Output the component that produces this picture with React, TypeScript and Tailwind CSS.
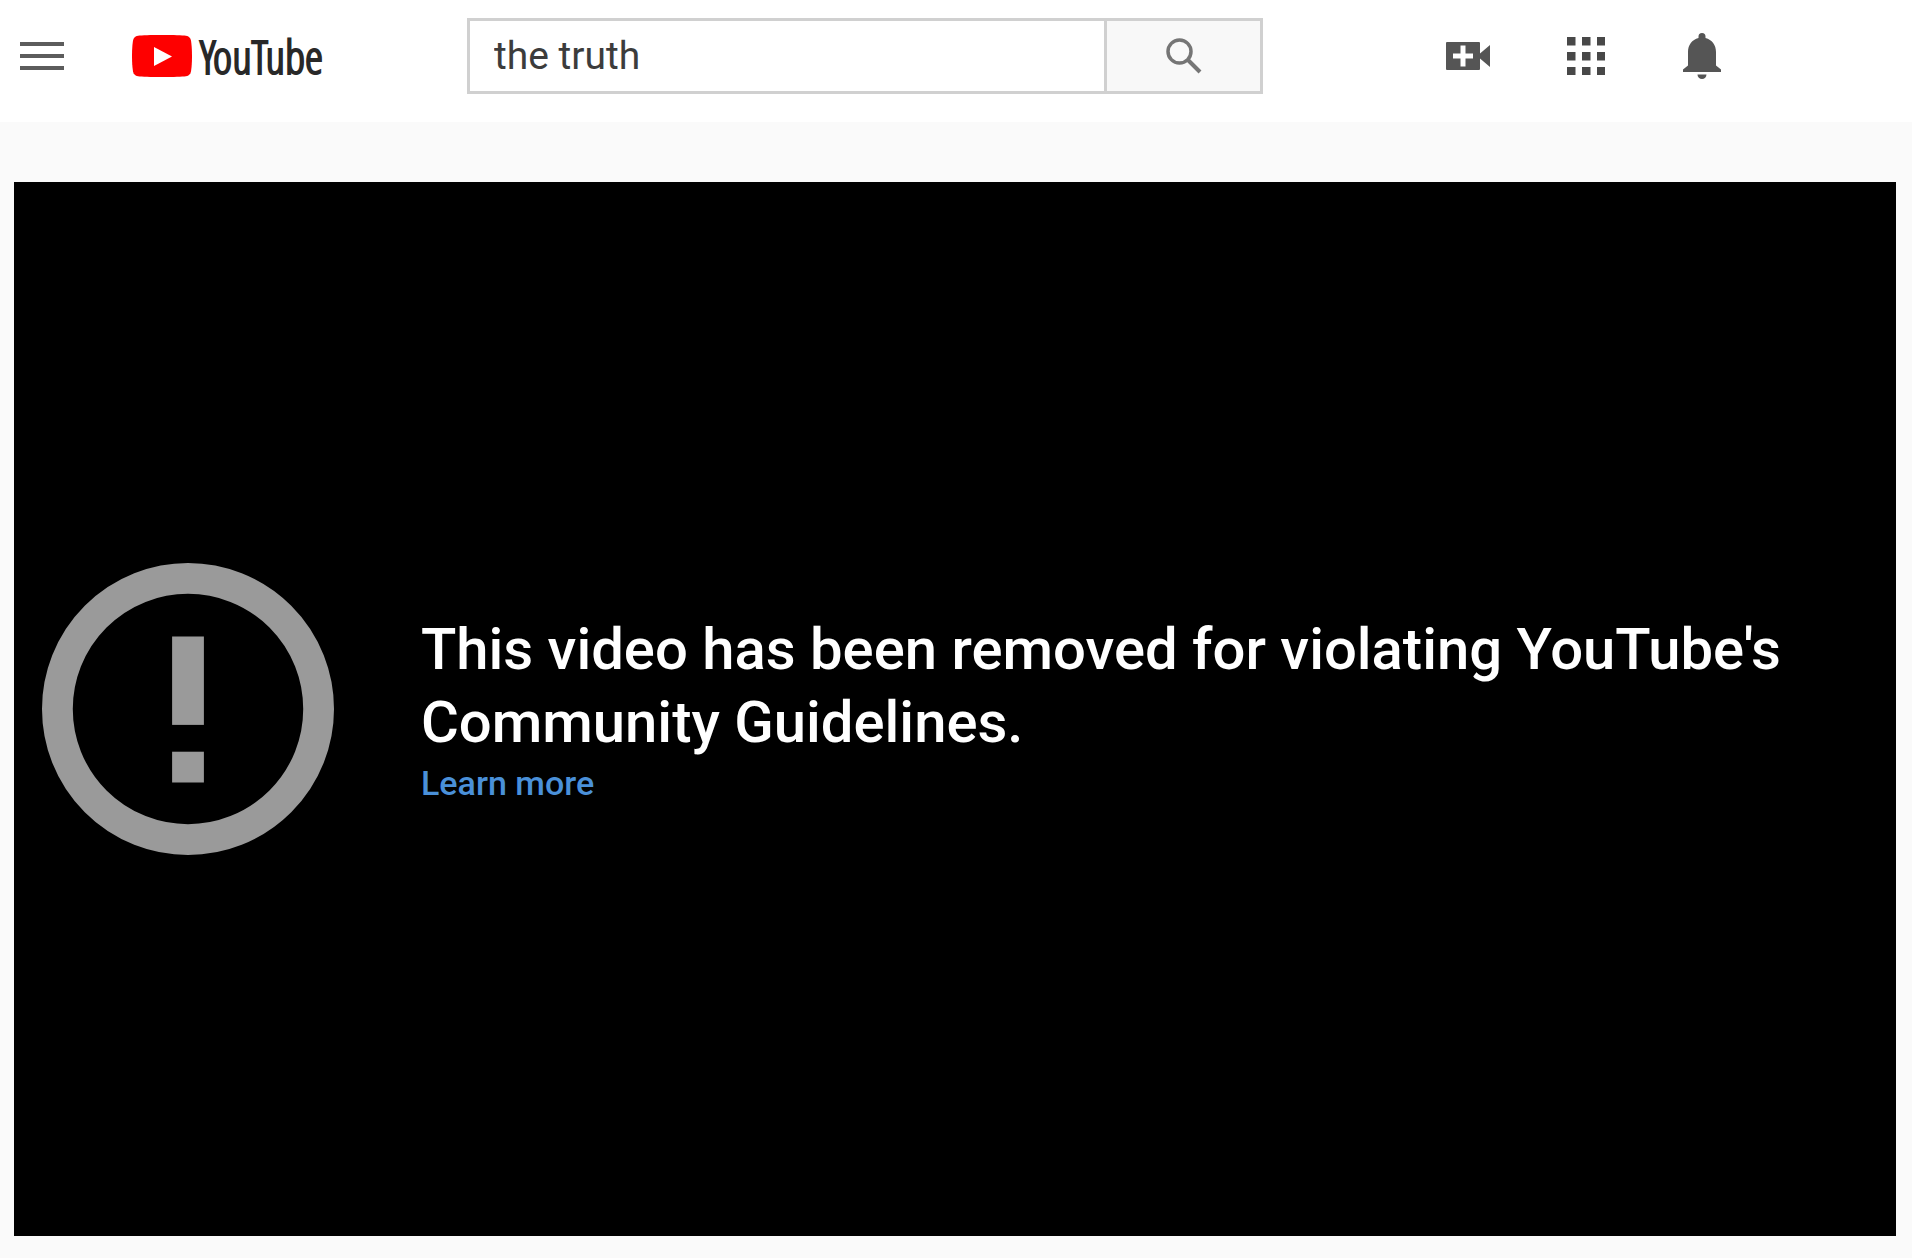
import { useState } from "react";

function MenuIcon() {
  return (
    <svg className="h-7 w-11" viewBox="0 0 44 28" fill="#5c5c5c" aria-hidden="true">
      <rect y="0" width="44" height="4" />
      <rect y="12" width="44" height="4" />
      <rect y="24" width="44" height="4" />
    </svg>
  );
}

function PlayLogo() {
  return (
    <svg className="h-[42px] w-[60px]" viewBox="0 0 60 42" aria-hidden="true">
      <path
        d="M30 0C42 0 50 .3 54 .8c3 .5 4.500 2.200 5 5C59.700 10 60 15 60 21s-.3 11-1 15.200c-.5 2.800-2 4.500-5 5-4 .5-12 .8-24 .8S10 41.700 6 41.200c-3-.5-4.500-2.200-5-5C.3 32 0 27 0 21S.3 10 1 5.800c.5-2.800 2-4.500 5-5C10 .3 18 0 30 0Z"
        fill="#fe0000"
      />
      <path d="M22 12v19l18-9.500Z" fill="#fff" />
    </svg>
  );
}

function SearchIcon() {
  return (
    <svg className="h-9 w-9" viewBox="0 0 36 36" fill="none" stroke="#757575" aria-hidden="true">
      <circle cx="13.500" cy="13.500" r="11.500" strokeWidth="3.500" />
      <path d="M21.500 21.500 34 34" strokeWidth="4" />
    </svg>
  );
}

function CreateIcon() {
  return (
    <svg className="h-7 w-11" viewBox="0 0 44 28" fill="#555" aria-hidden="true">
      <path
        fillRule="evenodd"
        d="M1 0h32a1 1 0 0 1 1 1v10.500L44 3v22l-10-8.500V27a1 1 0 0 1-1 1H1a1 1 0 0 1-1-1V1a1 1 0 0 1 1-1Zm13.500 3.500v8H7v5h7.500v8h5v-8H27v-5h-7.500v-8Z"
      />
    </svg>
  );
}

function AppsIcon() {
  const stops = [0, 15, 30];
  return (
    <svg className="h-[38px] w-[38px]" viewBox="0 0 38 38" fill="#484848" aria-hidden="true">
      {stops.map((y) => stops.map((x) => <rect key={`${x}-${y}`} x={x} y={y} width="8.500" height="8.500" />))}
    </svg>
  );
}

function BellIcon() {
  return (
    <svg className="h-[46px] w-10" viewBox="0 0 40 46" fill="#555" aria-hidden="true">
      <path d="M20 0a3.500 3.500 0 0 1 3.500 3.500V5C30 6.700 34 12 34 19v13.500l5 4V39H1v-2.500l5-4V19C6 12 10 6.700 16.500 5V3.500A3.500 3.500 0 0 1 20 0Z" />
      <path d="M15.500 41.500h9a4.500 4.500 0 0 1-9 0Z" />
    </svg>
  );
}

function AlertIcon() {
  return (
    <svg className="h-[292px] w-[292px] shrink-0" viewBox="0 0 294 294" fill="#9a9a9a" aria-hidden="true">
      <circle cx="147" cy="147" r="131.500" fill="none" stroke="#9a9a9a" strokeWidth="31" />
      <rect x="131" y="74" width="32" height="89" />
      <rect x="131" y="190" width="32" height="31" />
    </svg>
  );
}

export default function App() {
  const [query, setQuery] = useState("the truth");

  return (
    <div className="flex min-h-screen flex-col bg-white font-['Roboto',sans-serif]">
      <header className="flex items-center pt-[18px] pr-[198px] pb-7 pl-5">
        <button type="button" aria-label="Menu">
          <MenuIcon />
        </button>
        <a href="#home" aria-label="YouTube" className="ml-[68px] flex w-[335px] items-center gap-2">
          <PlayLogo />
          <span className="font-['Open_Sans_Condensed_Light','Open_Sans_Condensed','Roboto_Condensed',sans-serif] text-[46px] leading-10 font-light text-[#282828] [-webkit-text-stroke:2px_#282828]">
            YouTube
          </span>
        </a>
        <form role="search" className="flex h-[76px] w-[796px]" onSubmit={(e) => e.preventDefault()}>
          <input
            type="text"
            aria-label="Search"
            value={query}
            onChange={(e) => setQuery(e.target.value)}
            className="min-w-0 grow border-3 border-[#d0d0d0] bg-white pl-6 text-[39px] text-[#3c3c3c] outline-none"
          />
          <button
            type="submit"
            aria-label="Search"
            className="flex w-[156px] items-center justify-center border-3 border-l-0 border-[#d0d0d0] bg-[#f8f8f8]"
          >
            <SearchIcon />
          </button>
        </form>
        <nav aria-label="Account" className="ml-auto flex items-center gap-[77px]">
          <button type="button" aria-label="Create">
            <CreateIcon />
          </button>
          <button type="button" aria-label="Apps">
            <AppsIcon />
          </button>
          <button type="button" aria-label="Notifications">
            <BellIcon />
          </button>
        </nav>
      </header>
      <main className="mr-2 flex grow flex-col bg-[#fafafa] pt-[60px] pr-4 pb-[22px] pl-[14px]">
        <section className="flex grow items-center gap-[87px] bg-black px-7">
          <AlertIcon />
          <div className="pt-[2px]">
            <h1 className="text-[58px] leading-[73px] font-medium text-white">
              This video has been removed for violating YouTube's Community Guidelines.
            </h1>
            <a href="#guidelines" className="block text-[34px] leading-[48px] font-medium text-[#4a90d9]">
              Learn more
            </a>
          </div>
        </section>
      </main>
    </div>
  );
}
